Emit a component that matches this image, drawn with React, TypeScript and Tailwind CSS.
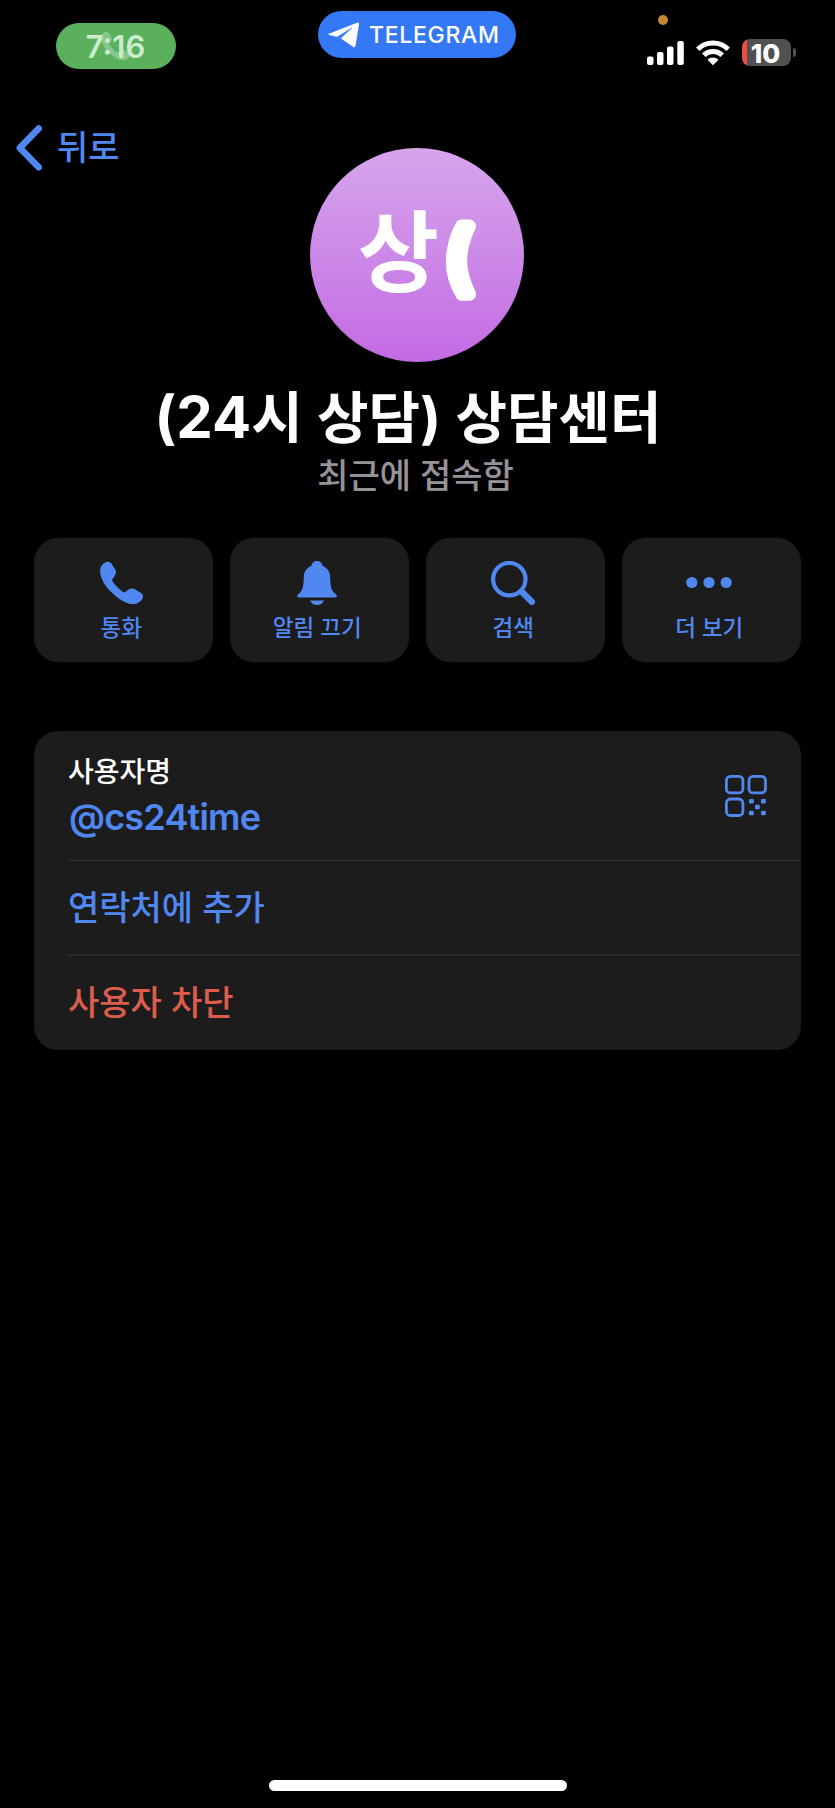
const ACTIONS = [
  { icon: PhoneIcon, label: '통화' },
  { icon: BellIcon, label: '알림 끄기' },
  { icon: SearchIcon, label: '검색' },
  { icon: MoreIcon, label: '더 보기' },
];

const PHONE_PATH =
  'M1 5.5C3 2.500 5.500.7 8 .7c1.500 0 2.600.7 3.500 2l4 6.200c.7 1.100.6 2.300.3 3.600-.4 1.700-1.500 3.200-2.900 4.900-.8 1-1 1.700-.5 2.600 1.200 2 2.800 4 5 6.200 2.200 2.200 4.100 3.700 6.100 4.900.8.500 1.600.300 2.300-.3 1.800-1.700 3.200-2.900 5.200-3.300 1.400-.3 2.700 0 4 .7l6 3.700c1.400.9 2 2 2 3.500 0 2.500-1.900 4.800-4.700 6.400-2.600 1.500-6.300 1.700-10 .6-6.200-1.900-12.300-6.500-17-11.400C6.500 26.600 2.300 20.500.7 14.500-.1 11.400-.1 8 1 5.500Z';

function PhoneIcon() {
  return (
    <svg viewBox="0 0 43 44" className="h-[44px] w-[43px]" fill="currentColor">
      <path d={PHONE_PATH} />
    </svg>
  );
}

function BellIcon() {
  return (
    <svg viewBox="0 0 40 44" className="h-[44px] w-[40px]" fill="currentColor">
      <path d="M20 0c-3 0-5.300 2.100-5.600 5C9.500 7.100 7.200 10.500 6.900 15c-.4 7.500-.3 12.700-3.500 16.200L.9 33.500C-.6 35 .1 36.500 2 36.500h36c1.900 0 2.600-1.500 1.100-3l-2.500-2.300c-3.200-3.500-3.100-8.700-3.500-16.200-.3-4.500-2.600-7.900-7.500-10C25.300 2.100 23 0 20 0Z" />
      <path d="M13 39.500h14c-1 2.700-3.700 4.500-7 4.500s-6-1.800-7-4.500Z" />
    </svg>
  );
}

function SearchIcon() {
  return (
    <svg viewBox="0 0 44 44" className="h-[44px] w-[44px]" fill="none" stroke="currentColor">
      <circle cx="18.300" cy="18.200" r="16.200" strokeWidth="4.200" />
      <path d="m30.500 30.500 10.300 10.300" strokeWidth="6.400" strokeLinecap="round" />
    </svg>
  );
}

function MoreIcon() {
  return (
    <svg viewBox="0 0 46 44" className="h-[44px] w-[46px]" fill="currentColor">
      <circle cx="5.800" cy="21.500" r="5.600" />
      <circle cx="23" cy="21.500" r="5.600" />
      <circle cx="40.200" cy="21.500" r="5.600" />
    </svg>
  );
}

function QrIcon() {
  return (
    <svg viewBox="0 0 42 42" className="h-[42px] w-[42px]" fill="none" stroke="currentColor" strokeWidth="2.800">
      <rect x="1.400" y="1.400" width="16.500" height="16.500" rx="4" />
      <rect x="24" y="1.400" width="16.500" height="16.500" rx="4" />
      <rect x="1.400" y="24" width="16.500" height="16.500" rx="4" />
      <g fill="currentColor" stroke="none">
        <rect x="24" y="24" width="4.800" height="4.600" rx="1" />
        <rect x="36" y="24" width="4.800" height="4.600" rx="1" />
        <rect x="30" y="29.700" width="4.800" height="4.600" rx="1" />
        <rect x="24" y="35.700" width="4.800" height="4.600" rx="1" />
        <rect x="36" y="35.700" width="4.800" height="4.600" rx="1" />
      </g>
    </svg>
  );
}

function StatusBar() {
  return (
    <div className="flex h-[110px] items-start">
      <div className="relative mt-[23px] ml-[56px] flex h-[46px] w-[120px] items-center justify-center rounded-full bg-[#5bb15b]">
        <svg viewBox="0 0 43 44" className="absolute top-[8px] left-[45px] h-[30px] w-[29px] text-[#86c88b]" fill="currentColor">
          <path d={PHONE_PATH} />
        </svg>
        <span className="relative mt-px -ml-px text-[31px] leading-[46px] font-semibold text-[#cdeccd]">7:16</span>
      </div>

      <div className="mt-[11px] ml-[142px] flex h-[47px] w-[198px] items-center rounded-full bg-[#3478f6] pl-[10px]">
        <svg viewBox="0 0 32 26" className="h-[26px] w-[32px]" fill="#fff">
          <path d="M.8 11.700 29 .7c1.500-.5 2.200.2 2 1.800l-3.500 21.300c-.3 1.500-1.300 1.800-2.500.9L13.600 17c-.7-.5-.6-1 0-1.600L23.900 6.300c.5-.4.1-.8-.5-.4L10 14.200c-.8.5-1.600.6-2.500.3L1 12.900c-.8-.3-.9-.9-.2-1.200Z" />
        </svg>
        <span className="mt-px ml-[9px] text-[23px] leading-[46px] font-medium tracking-[0.7px] text-white">TELEGRAM</span>
      </div>

      <div className="ml-[131px] flex flex-col">
        <div className="mt-[15px] ml-[11px] size-[10px] rounded-full bg-[#c6872f]" />
        <div className="mt-[14px] flex items-start">
          <svg viewBox="0 0 38 26" className="mt-[1px] h-[26px] w-[38px]" fill="#fff">
            <rect x="0" y="16.500" width="6.500" height="8.500" rx="2" />
            <rect x="10" y="12" width="6.500" height="13" rx="2" />
            <rect x="20" y="6.500" width="6.500" height="18.500" rx="2" />
            <rect x="30.300" y="1" width="6.500" height="24" rx="2" />
          </svg>
          <svg viewBox="0 0 36 27" className="ml-[10px] h-[27px] w-[36px]" fill="none" stroke="#fff" strokeWidth="5">
            <path d="M2.800 10.200a21.800 21.800 0 0 1 30.400 0" />
            <path d="M8.800 16.300a13.200 13.200 0 0 1 18.400 0" />
            <path d="M18 26.200 12.500 20.800a7.800 7.800 0 0 1 11 0Z" fill="#fff" stroke="none" />
          </svg>
          <div className="ml-[11px] flex h-[27px] w-[49px] items-center justify-center rounded-[8px] bg-linear-to-r from-[#ee4d3d] from-[5px] to-[#505051] to-[5px]">
            <span className="mt-px -ml-[2px] text-[26px] leading-[27px] font-extrabold text-white">10</span>
          </div>
          <div className="mt-[9px] ml-[2px] h-[9px] w-[3px] rounded-r-full bg-[#505051]" />
        </div>
      </div>
    </div>
  );
}

export default function App() {
  return (
    <div className="flex h-[1808px] w-[835px] flex-col overflow-hidden bg-black font-['Inter','Noto_Sans_CJK_KR',sans-serif] whitespace-nowrap">
      <StatusBar />

      <header className="flex h-[38px] items-start text-[#5187f0]">
        <svg viewBox="0 0 26 46" className="mt-[15px] ml-[16px] h-[46px] w-[26px]" fill="none" stroke="currentColor" strokeWidth="6.600" strokeLinecap="round" strokeLinejoin="round">
          <path d="M22.700 3.500 3.800 22.900 22.700 42.300" />
        </svg>
        <span className="mt-[14px] ml-[15px] text-[34px] leading-[48px] font-medium">뒤로</span>
      </header>

      <section className="flex flex-col items-center">
        <div className="-ml-px size-[214px] rounded-full bg-linear-to-b from-[#d6a5eb] to-[#c36ae3]">
          <svg viewBox="0 0 214 214" className="size-full" fill="#fff">
            <text x="48" y="136" fontSize="88" fontWeight="700" fontFamily="Noto Sans CJK KR, sans-serif">상</text>
            <text x="135" y="136" fontSize="75" fontWeight="500" fontFamily="Inter, sans-serif" stroke="#fff" strokeWidth="13" strokeLinejoin="round">(</text>
          </svg>
        </div>
        <h1 className="mt-[20px] -ml-[19px] text-[56px] leading-[72px] font-bold text-white [word-spacing:1px]">
          <span className="text-[58px] leading-none">(24</span>시 상담) 상담센터
        </h1>
        <p className="-ml-[4px] h-[84px] text-[34px] leading-[44px] font-medium text-[#949398]">최근에 접속함</p>
      </section>

      <nav className="mr-[34.5px] ml-[34px] grid grid-cols-4 gap-[17.5px] text-[#5187f0]">
        {ACTIONS.map(({ icon: Icon, label }) => (
          <button key={label} className="flex h-[124px] flex-col items-center rounded-[24px] bg-[#1c1c1c] pt-[23px] pr-[4px]">
            <Icon />
            <span className="mt-[7px] text-[22.500px] leading-[32px] font-medium">{label}</span>
          </button>
        ))}
      </nav>

      <section className="mt-[69px] mr-[34.5px] ml-[34px] rounded-[24px] bg-[#1c1c1c] pl-[34px] text-[34px] font-medium text-[#5187f0]">
        <div className="flex h-[130px] items-start justify-between border-b border-[#323232] pr-[34px]">
          <div className="flex flex-col pt-[21px]">
            <span className="text-[28px] leading-[40px] text-white">사용자명</span>
            <span className="ml-px text-[36px] leading-[51px] font-semibold tracking-[-0.8px]">@cs24time</span>
          </div>
          <div className="mt-[44px]">
            <QrIcon />
          </div>
        </div>
        <div className="flex h-[95px] items-center border-b-2 border-[#292929]">연락처에 추가</div>
        <div className="flex h-[94px] items-center pb-px text-[#dd5d4c]">사용자 차단</div>
      </section>

      <div className="mx-auto mt-auto mb-[17px] h-[11px] w-[298px] rounded-full bg-white" />
    </div>
  );
}
